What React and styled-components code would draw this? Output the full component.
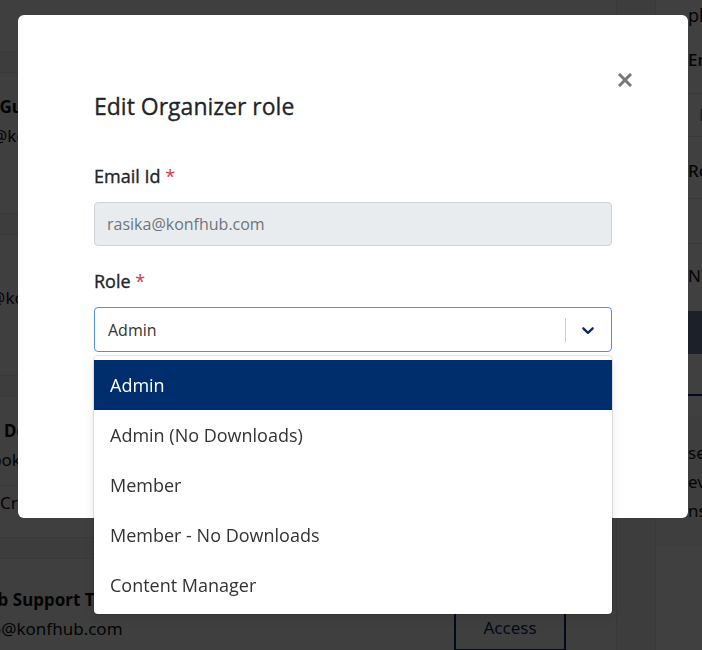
import React from "react";
import styled, { createGlobalStyle } from "styled-components";

const GlobalStyle = createGlobalStyle`
    html, body {
        margin: 0;
        padding: 0;
        background: #f2f3f5;
        font-family: "Noto Sans", "Open Sans", sans-serif;
        color: #212529;
        overflow: hidden;
    }
`;

const members = [
    { name: "Priya", email: "priya@konfhub.com", chip: true },
    { name: "Jane Gupta", email: "jane@konfhub.com", chip: true },
    { name: "Ram", email: "ram@konfhub.com", chip: true },
    { name: "Asha Deshpande", email: "facebokconf@gmail.com", footer: "Created by" },
];

const roles = [
    "Admin",
    "Admin (No Downloads)",
    "Member",
    "Member - No Downloads",
    "Content Manager",
];

export default function App() {
    return (
        <>
            <GlobalStyle />
            <Page>
                <Main>
                    {members.map((m, i) => (
                        <MemberCard key={i}>
                            <MemberName>{m.name}</MemberName>
                            <MemberEmail>{m.email}</MemberEmail>
                            {m.chip && <Chip />}
                            {m.footer && <CardFooter>{m.footer}</CardFooter>}
                        </MemberCard>
                    ))}
                    <SupportCard>
                        <div>
                            <MemberName>KonfHub Support Team</MemberName>
                            <MemberEmail>konfhub@konfhub.com</MemberEmail>
                        </div>
                        <AccessButton>Access</AccessButton>
                    </SupportCard>
                </Main>
                <Side>
                    <SideTitle>plans</SideTitle>
                    <SideLabel>Email Id</SideLabel>
                    <SideInput>Enter email</SideInput>
                    <SideLabel $gap="21px">Role</SideLabel>
                    <SideInput $tall $gap="14px" />
                    <SideNote>Note: select role</SideNote>
                    <SideButton />
                    <SideRule />
                    <InfoBox>
                        <span>se</span>
                        <span>eve</span>
                        <span>ns</span>
                    </InfoBox>
                </Side>
            </Page>

            <Backdrop>
                <Modal>
                    <CloseButton aria-label="close">
                        <svg width="14" height="14" viewBox="0 0 14 14">
                            <path
                                d="M2 2 L12 12 M12 2 L2 12"
                                stroke="#777"
                                strokeWidth="3"
                                strokeLinecap="square"
                            />
                        </svg>
                    </CloseButton>
                    <Title>Edit Organizer role</Title>

                    <Field>
                        <Label>
                            Email Id <Required>*</Required>
                        </Label>
                        <DisabledInput>rasika@konfhub.com</DisabledInput>
                    </Field>

                    <Field>
                        <Label>
                            Role <Required>*</Required>
                        </Label>
                        <SelectWrap>
                            <SelectControl>
                                <SelectValue>Admin</SelectValue>
                                <Separator />
                                <Indicator>
                                    <svg width="20" height="20" viewBox="0 0 20 20">
                                        <path
                                            fill="#0b2a63"
                                            d="M4.516 7.548c0.436-0.446 1.043-0.481 1.576 0l3.908 3.747 3.908-3.747c0.533-0.481 1.141-0.446 1.574 0 0.436 0.445 0.408 1.197 0 1.615-0.406 0.418-4.695 4.502-4.695 4.502-0.217 0.223-0.502 0.335-0.787 0.335s-0.57-0.112-0.789-0.335c0 0-4.287-4.084-4.695-4.502s-0.436-1.17 0-1.615z"
                                        />
                                    </svg>
                                </Indicator>
                            </SelectControl>
                            <Menu>
                                {roles.map((r, i) => (
                                    <Option key={r} $selected={i === 0}>
                                        {r}
                                    </Option>
                                ))}
                            </Menu>
                        </SelectWrap>
                    </Field>
                </Modal>
            </Backdrop>
        </>
    );
}

/* page behind the modal */

const Page = styled.div`
    display: flex;
    height: 650px;
    overflow: hidden;
`;

const Main = styled.div`
    width: 756px;
    margin-left: -140px;
    margin-top: -90px;
    display: flex;
    flex-direction: column;
    gap: 20px;
    flex-shrink: 0;
    border-right: 1px solid #dee2e6;
`;

const MemberCard = styled.div`
    height: 142px;
    flex-shrink: 0;
    box-sizing: border-box;
    background: #fbfbfb;
    border-top: 1px solid #dee2e6;
    border-bottom: 1px solid #dee2e6;
    padding: 21px 0 0 98px;
    display: flex;
    flex-direction: column;
`;

const MemberName = styled.div`
    font-size: 17px;
    font-weight: 700;
    line-height: 26px;
    color: #111;
    white-space: nowrap;
`;

const MemberEmail = styled.div`
    font-size: 17px;
    line-height: 26px;
    margin-top: 3px;
    color: #111;
    white-space: nowrap;
`;

const Chip = styled.div`
    width: 26px;
    height: 26px;
    border-radius: 50%;
    background: #ffffff;
    margin: 12px 0 0 -114px;
`;

const CardFooter = styled.div`
    margin: 12px 0 0 42px;
    padding-top: 5px;
    border-top: 1px solid #dee2e6;
    font-size: 17px;
    color: #111;
`;

const SupportCard = styled.div`
    height: 160px;
    flex-shrink: 0;
    box-sizing: border-box;
    background: #fbfbfb;
    border-top: 1px solid #dee2e6;
    padding: 28px 50px 0 74px;
    display: flex;
    justify-content: space-between;
    align-items: flex-start;
`;

const AccessButton = styled.div`
    width: 108px;
    height: 44px;
    margin-top: 16px;
    border: 2px solid #0b2a63;
    display: flex;
    align-items: center;
    justify-content: center;
    font-size: 17px;
    color: #0b2a63;
`;

const Side = styled.div`
    flex: 1;
    margin-left: 38px;
    padding: 2px 0 0 32px;
    border-left: 1px solid #dee2e6;
    background: #ffffff;
    display: flex;
    flex-direction: column;
    white-space: nowrap;
    overflow: hidden;
    font-size: 17px;
    color: #111;
`;

const SideTitle = styled.div`
    font-size: 18px;
    line-height: 26px;
`;

const SideLabel = styled.div`
    margin-top: ${(p) => p.$gap || "19px"};
    line-height: 26px;
    font-weight: 500;
`;

const SideInput = styled.div`
    margin-top: ${(p) => p.$gap || "20px"};
    height: ${(p) => (p.$tall ? "46px" : "44px")};
    box-sizing: border-box;
    border-top: 1px solid #dee2e6;
    border-bottom: 1px solid #dee2e6;
    padding-left: 11px;
    display: flex;
    align-items: center;
    font-size: 16px;
    color: #6c757d;
`;

const SideNote = styled.div`
    margin-top: 19px;
    line-height: 26px;
`;

const SideButton = styled.div`
    margin-top: 22px;
    height: 43px;
    margin-left: -32px;
    background: #6c80a4;
`;

const SideRule = styled.div`
    margin-top: 40px;
    height: 2px;
    background: #0b2a63;
`;

const InfoBox = styled.div`
    margin: 20px 0 0 -32px;
    padding: 22px 0 0 32px;
    height: 108px;
    background: #f7f7f7;
    display: flex;
    flex-direction: column;
    line-height: 29px;
`;

/* modal */

const Backdrop = styled.div`
    position: fixed;
    inset: 0;
    background: rgba(0, 0, 0, 0.75);
    padding: 15px 0 0 18px;
`;

const Modal = styled.div`
    position: relative;
    width: 670px;
    height: 503px;
    box-sizing: border-box;
    background: #ffffff;
    border-radius: 6px;
    padding: 75px 76px 0;
    display: flex;
    flex-direction: column;
    gap: 22px;
    font-family: "Open Sans", "Noto Sans", sans-serif;
`;

const CloseButton = styled.div`
    position: absolute;
    top: 58px;
    right: 56px;
    width: 14px;
    height: 14px;
    display: flex;
`;

const Title = styled.h2`
    margin: 0 0 18px;
    font-size: 23px;
    font-weight: 400;
    line-height: 33px;
    color: #212529;
    -webkit-text-stroke: 0.3px #212529;
`;

const Field = styled.div`
    display: flex;
    flex-direction: column;
    gap: 13px;
`;

const Label = styled.label`
    font-size: 18px;
    font-weight: 400;
    line-height: 26px;
    color: #212529;
    -webkit-text-stroke: 0.35px #212529;
`;

const Required = styled.span`
    color: #dc3545;
    -webkit-text-stroke: 0;
`;

const DisabledInput = styled.div`
    height: 44px;
    box-sizing: border-box;
    background: #e9ecef;
    border: 1px solid #ced4da;
    border-radius: 4px;
    padding: 0 12px;
    display: flex;
    align-items: center;
    font-size: 16px;
    color: #6c757d;
`;

const SelectWrap = styled.div`
    position: relative;
`;

const SelectControl = styled.div`
    height: 45px;
    box-sizing: border-box;
    border: 1px solid #4c8ef7;
    border-radius: 4px;
    display: flex;
    align-items: center;
    background: #ffffff;
`;

const SelectValue = styled.div`
    flex: 1;
    padding-left: 13px;
    font-size: 16px;
    color: #333333;
`;

const Separator = styled.span`
    width: 1px;
    height: 24px;
    background: #cccccc;
`;

const Indicator = styled.div`
    padding: 0 13px 0 12px;
    display: flex;
`;

const Menu = styled.div`
    position: absolute;
    top: 49px;
    left: 0;
    right: 0;
    padding: 4px 0;
    background: #ffffff;
    border-radius: 4px;
    box-shadow: 0 0 0 1px rgba(0, 0, 0, 0.1), 0 4px 11px rgba(0, 0, 0, 0.1);
    z-index: 2;
`;

const Option = styled.div`
    height: 50px;
    padding-left: 16px;
    display: flex;
    align-items: center;
    font-size: 18px;
    color: ${(p) => (p.$selected ? "#ffffff" : "#333333")};
    background: ${(p) => (p.$selected ? "#002d6c" : "transparent")};
`;
